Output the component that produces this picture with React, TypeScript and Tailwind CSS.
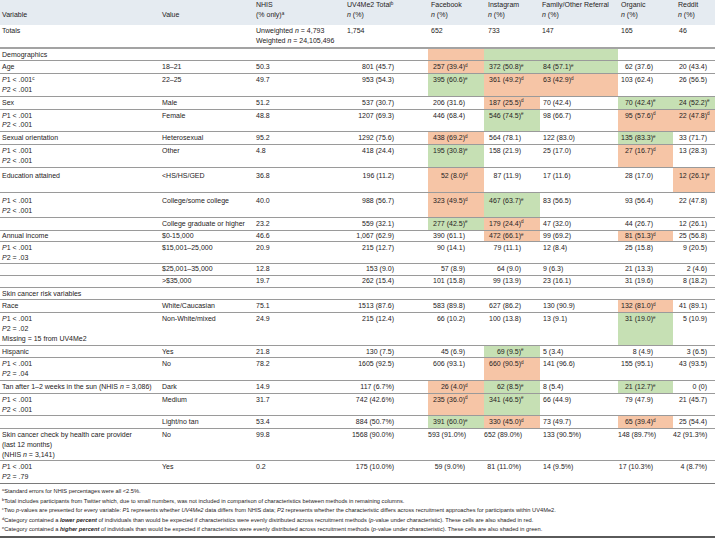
import type { ReactNode } from "react"

type Tone = "o" | "g"
type Shaded = { t: string; s: string; b: Tone }
type Cell = string | Shaded
type Row = { v?: ReactNode; val?: string; n?: string; c: Cell[]; py?: string }

const o = (t: string, s: string): Shaded => ({ t, s, b: "o" })
const g = (t: string, s: string): Shaded => ({ t, s, b: "g" })

const bg: Record<Tone, string> = { o: "bg-[#f6c5a6]", g: "bg-[#c6e0b4]" }

// data cells: UV4Me2, Facebook, Instagram, Family, Organic, Reddit
const cellCls = [
  "text-right pr-[34px]",
  "text-right pr-[19px]",
  "text-right pr-[19px]",
  "text-left pl-[3px]",
  "text-right pr-[20px]",
  "text-right pr-[8px]",
]

function P({ k, t, sup }: { k: string; t: string; sup?: string }) {
  return (
    <div>
      <i>P</i>
      {k} {t}
      {sup && <sup className="text-[4.6px]">{sup}</sup>}
    </div>
  )
}

const pp = (a = "< .001", b = "< .001", sup?: string) => (
  <>
    <P k="1" t={a} sup={sup} />
    <P k="2" t={b} />
  </>
)

const tight = "py-[0.5px]"

const rows: Row[] = [
  { v: "Age", val: "18–21", n: "50.3", c: ["801 (45.7)", o("257 (39.4)", "d"), g("372 (50.8)", "e"), g("84 (57.1)", "e"), "62 (37.6)", "20 (43.4)"] },
  { v: pp("< .001", "< .001", "c"), val: "22–25", n: "49.7", c: ["953 (54.3)", g("395 (60.6)", "e"), o("361 (49.2)", "d"), o("63 (42.9)", "d"), "103 (62.4)", "26 (56.5)"] },
  { v: "Sex", val: "Male", n: "51.2", c: ["537 (30.7)", "206 (31.6)", o("187 (25.5)", "d"), "70 (42.4)", g("70 (42.4)", "e"), g("24 (52.2)", "e")] },
  { v: pp(), val: "Female", n: "48.8", c: ["1207 (69.3)", "446 (68.4)", g("546 (74.5)", "e"), "98 (66.7)", o("95 (57.6)", "d"), o("22 (47.8)", "d")] },
  { v: "Sexual orientation", val: "Heterosexual", n: "95.2", c: ["1292 (75.6)", o("438 (69.2)", "d"), "564 (78.1)", "122 (83.0)", g("135 (83.3)", "e"), "33 (71.7)"] },
  { v: pp(), val: "Other", n: "4.8", c: ["418 (24.4)", g("195 (30.8)", "e"), "158 (21.9)", "25 (17.0)", o("27 (16.7)", "d"), "13 (28.3)"] },
  { v: <><div>Education attained</div><div>&nbsp;</div></>, val: "<HS/HS/GED", n: "36.8", py: "pt-[3.5px] pb-[1.5px]", c: ["196 (11.2)", o("52 (8.0)", "d"), "87 (11.9)", "17 (11.6)", "28 (17.0)", o("12 (26.1)", "e")] },
  { v: pp(), val: "College/some college", n: "40.0", py: "pt-[3px] pb-[1px]", c: ["988 (56.7)", o("323 (49.5)", "d"), g("467 (63.7)", "e"), "83 (56.5)", "93 (56.4)", "22 (47.8)"] },
  { val: "College graduate or higher", n: "23.2", c: ["559 (32.1)", g("277 (42.5)", "e"), o("179 (24.4)", "d"), "47 (32.0)", "44 (26.7)", "12 (26.1)"] },
  { v: "Annual income", val: "$0-15,000", n: "46.6", py: tight, c: ["1,067 (62.9)", "390 (61.1)", o("472 (66.1)", "e"), "99 (69.2)", o("81 (51.3)", "d"), "25 (56.8)"] },
  { v: pp("< .001", "= .03"), val: "$15,001–25,000", n: "20.9", py: tight, c: ["215 (12.7)", "90 (14.1)", "79 (11.1)", "12 (8.4)", "25 (15.8)", "9 (20.5)"] },
  { val: "$25,001–35,000", n: "12.8", py: tight, c: ["153 (9.0)", "57 (8.9)", "64 (9.0)", "9 (6.3)", "21 (13.3)", "2 (4.6)"] },
  { val: ">$35,000", n: "19.7", py: tight, c: ["262 (15.4)", "101 (15.8)", "99 (13.9)", "23 (16.1)", "31 (19.6)", "8 (18.2)"] },
]

const rows2: Row[] = [
  { v: "Race", val: "White/Caucasian", n: "75.1", c: ["1513 (87.6)", "583 (89.8)", "627 (86.2)", "130 (90.9)", o("132 (81.0)", "d"), "41 (89.1)"] },
  { v: <>{pp("< .001", "= .02")}<div>Missing = 15 from UV4Me2</div></>, val: "Non-White/mixed", n: "24.9", c: ["215 (12.4)", "66 (10.2)", "100 (13.8)", "13 (9.1)", g("31 (19.0)", "e"), "5 (10.9)"] },
  { v: "Hispanic", val: "Yes", n: "21.8", c: ["130 (7.5)", "45 (6.9)", g("69 (9.5)", "e"), "5 (3.4)", "8 (4.9)", "3 (6.5)"] },
  { v: pp("< .001", "= .04"), val: "No", n: "78.2", c: ["1605 (92.5)", "606 (93.1)", o("660 (90.5)", "d"), "141 (96.6)", "155 (95.1)", "43 (93.5)"] },
  { v: <span className="whitespace-nowrap">Tan after 1–2 weeks in the sun (NHIS <i>n</i> = 3,086)</span>, val: "Dark", n: "14.9", c: ["117 (6.7%)", o("26 (4.0)", "d"), g("62 (8.5)", "e"), "8 (5.4)", g("21 (12.7)", "e"), "0 (0)"] },
  { v: pp(), val: "Medium", n: "31.7", c: ["742 (42.6%)", o("235 (36.0)", "d"), g("341 (46.5)", "e"), "66 (44.9)", "79 (47.9)", "21 (45.7)"] },
  { val: "Light/no tan", n: "53.4", c: ["884 (50.7%)", g("391 (60.0)", "e"), o("330 (45.0)", "d"), "73 (49.7)", o("65 (39.4)", "d"), "25 (54.4)"] },
  { v: <><div>Skin cancer check by health care provider</div><div>(last 12 months)</div><div>(NHIS <i>n</i> = 3,141)</div></>, val: "No", n: "99.8", c: ["1568 (90.0%)", "593 (91.0%)", "652 (89.0%)", "133 (90.5%)", "148 (89.7%)", "42 (91.3%)"] },
  { v: pp("< .001", "= .79"), val: "Yes", n: "0.2", c: ["175 (10.0%)", "59 (9.0%)", "81 (11.0%)", "14 (9.5%)", "17 (10.3%)", "4 (8.7%)"] },
]

function DataRow({ r, last }: { r: Row; last?: boolean }) {
  const py = r.py ?? "py-[1px]"
  return (
    <tr className={last ? "align-top border-b-[1.5px] border-[#7a7a7a]" : "align-top border-b border-[#9a9a9a]"}>
      <td className={`pl-[2px] ${py}`}>{r.v}</td>
      <td className={`pl-[2px] whitespace-nowrap ${py}`}>{r.val}</td>
      <td className={`pl-[2px] ${py}`}>{r.n}</td>
      {r.c.map((c, i) =>
        typeof c === "string" ? (
          <td key={i} className={`whitespace-nowrap ${py} ${cellCls[i]}`}>{c}</td>
        ) : (
          <td key={i} className={`whitespace-nowrap ${py} ${cellCls[i]} ${bg[c.b]}`}>
            {c.t}
            <sup className="inline-block w-0 text-left text-[4.6px]">{c.s}</sup>
          </td>
        )
      )}
    </tr>
  )
}

function Section({ label, shade }: { label: string; shade?: (Tone | null)[] }) {
  return (
    <tr className="align-top border-b border-[#9a9a9a]">
      <td colSpan={3} className="pl-[2px] py-[1px]">{label}</td>
      {[0, 1, 2, 3, 4, 5].map((i) => (
        <td key={i} className={shade && shade[i] ? bg[shade[i] as Tone] : ""}></td>
      ))}
    </tr>
  )
}

const N = () => <i>n</i>

export default function App() {
  return (
    <div className="w-[715px] h-[545px] overflow-hidden bg-white text-[#262223] font-['Liberation_Sans',Arial,sans-serif] text-[7px] leading-[10px]">
      <table className="w-[715px] table-fixed border-collapse">
        <colgroup>
          <col className="w-[160px]" />
          <col className="w-[94px]" />
          <col className="w-[91px]" />
          <col className="w-[83px]" />
          <col className="w-[56px]" />
          <col className="w-[56px]" />
          <col className="w-[78px]" />
          <col className="w-[55px]" />
          <col className="w-[42px]" />
        </colgroup>
        <thead>
          <tr className="bg-[#e5ebf1] align-bottom">
            <th className="pl-[2px] pt-[6px] pb-[5px] text-left font-normal">Variable</th>
            <th className="pl-[2px] pb-[5px] text-left font-normal">Value</th>
            <th className="pl-[2px] pb-[5px] text-left font-normal">
              <div>NHIS</div>
              <div>(% only)<sup className="text-[4.6px]">a</sup></div>
            </th>
            <th className="pl-[2px] pb-[5px] text-left font-normal">
              <div>UV4Me2 Total<sup className="text-[4.6px]">b</sup></div>
              <div><N /> (%)</div>
            </th>
            <th className="pl-[3px] pb-[5px] text-left font-normal">
              <div>Facebook</div>
              <div><N /> (%)</div>
            </th>
            <th className="pl-[4px] pb-[5px] text-left font-normal">
              <div>Instagram</div>
              <div><N /> (%)</div>
            </th>
            <th className="pl-[2px] pb-[5px] text-left font-normal">
              <div className="whitespace-nowrap">Family/Other Referral</div>
              <div><N /> (%)</div>
            </th>
            <th className="pl-[3px] pb-[5px] text-left font-normal">
              <div>Organic</div>
              <div><N /> (%)</div>
            </th>
            <th className="pl-[5px] pb-[5px] text-left font-normal">
              <div>Reddit</div>
              <div><N /> (%)</div>
            </th>
          </tr>
        </thead>
        <tbody className="leading-[9.8px]">
          <tr className="align-top border-b-2 border-[#a3a3a3]">
            <td className="pl-[2px] py-[1px]">Totals</td>
            <td></td>
            <td className="pl-[2px] py-[1px] whitespace-nowrap">
              <div>Unweighted <N /> = 4,793</div>
              <div>Weighted <N /> = 24,105,496</div>
            </td>
            <td className="pl-[2px] py-[1px]">1,754</td>
            <td className="pl-[3px] py-[1px]">652</td>
            <td className="pl-[4px] py-[1px]">733</td>
            <td className="pl-[2px] py-[1px]">147</td>
            <td className="pl-[3px] py-[1px]">165</td>
            <td className="pl-[6px] py-[1px]">46</td>
          </tr>
          <Section label="Demographics" shade={[null, "o", "g", "g", null, null]} />
          {rows.map((r, i) => (
            <DataRow key={i} r={r} />
          ))}
          <Section label="Skin cancer risk variables" />
          {rows2.map((r, i) => (
            <DataRow key={i} r={r} last={i === rows2.length - 1} />
          ))}
        </tbody>
      </table>
      <div className="pl-[2px] pt-[3px] pb-[1px] text-[5.7px] leading-[9.6px] border-b-2 border-[#5a5a5a]">
        <div><sup className="text-[4px]">a</sup>Standard errors for NHIS percentages were all &lt;2.5%.</div>
        <div><sup className="text-[4px]">b</sup>Total includes participants from Twitter which, due to small numbers, was not included in comparison of characteristics between methods in remaining columns.</div>
        <div>
          <sup className="text-[4px]">c</sup>Two <i>p</i>-values are presented for every variable: <i>P</i>1 represents whether <i>UV4Me2</i> data differs from NHIS data; <i>P</i>2 represents whether the characteristic differs across recruitment approaches for participants within UV4Me2.
        </div>
        <div>
          <sup className="text-[4px]">d</sup>Category contained a <b><i>lower percent</i></b> of individuals than would be expected if characteristics were evenly distributed across recruitment methods (<i>p</i>-value under characteristic). These cells are also shaded in red.
        </div>
        <div>
          <sup className="text-[4px]">e</sup>Category contained a <b><i>higher percent</i></b> of individuals than would be expected if characteristics were evenly distributed across recruitment methods (<i>p</i>-value under characteristic). These cells are also shaded in green.
        </div>
      </div>
    </div>
  )
}
